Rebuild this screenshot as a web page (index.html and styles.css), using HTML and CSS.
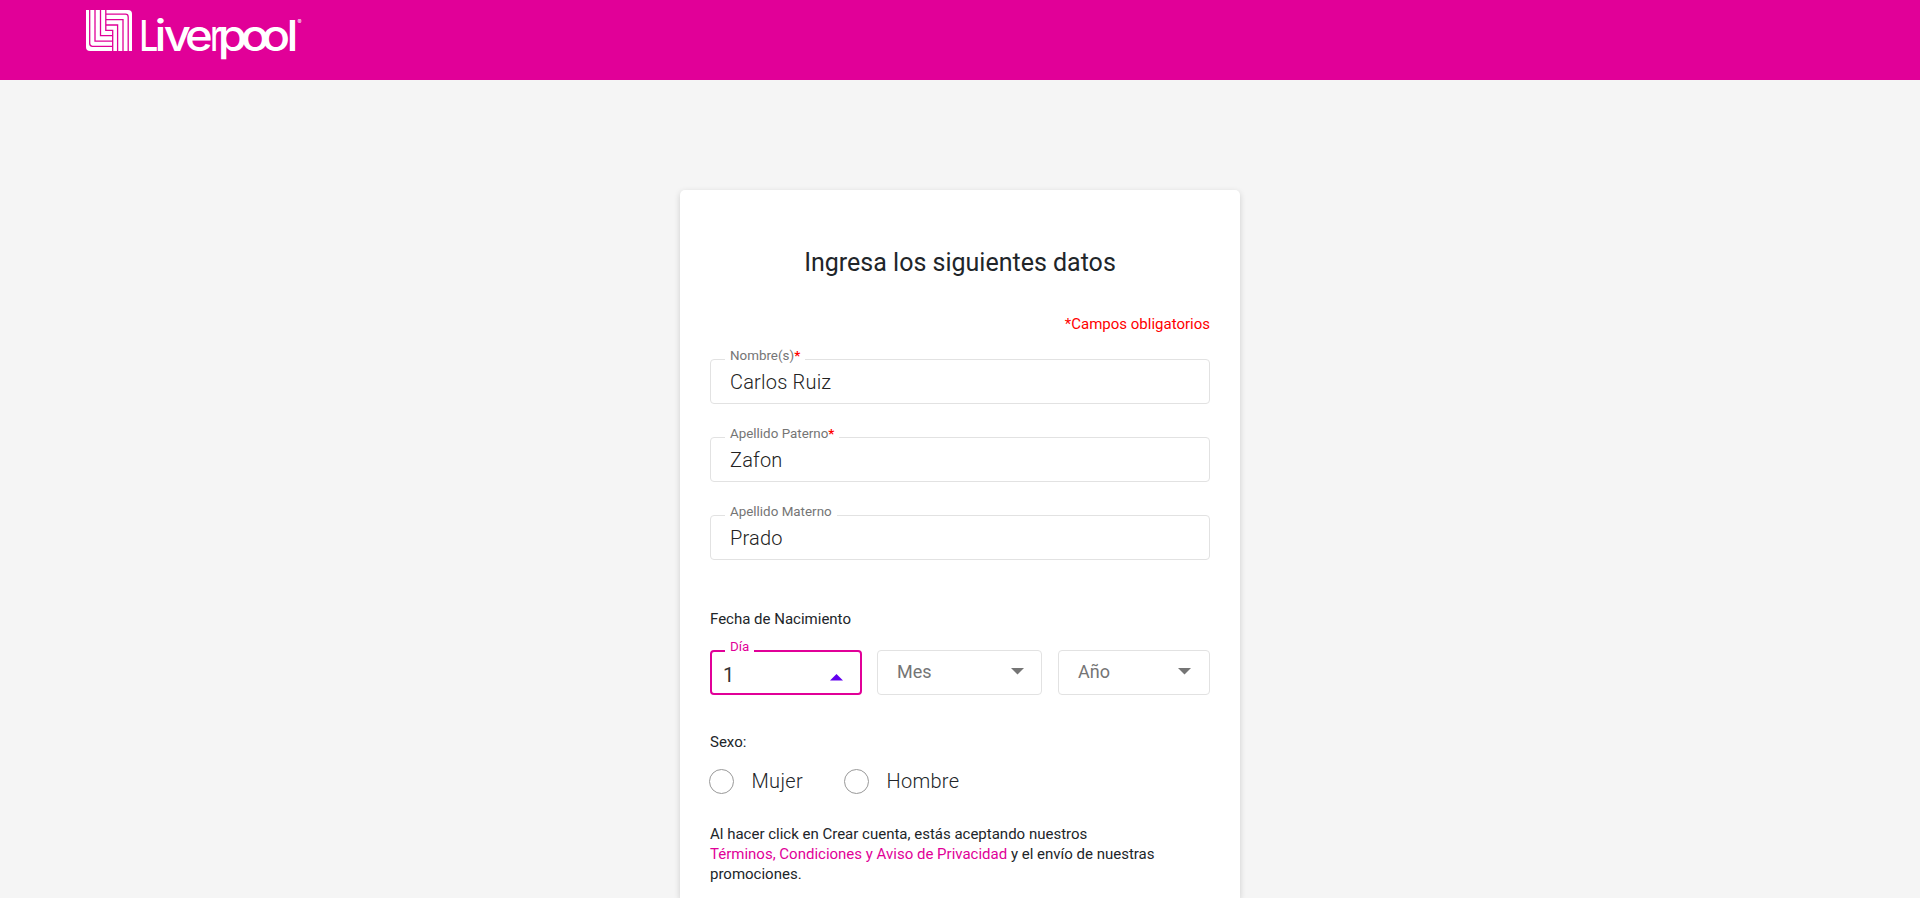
FILE: index.html
```html
<!DOCTYPE html>
<html lang="es">
<head>
<meta charset="utf-8">
<title>Liverpool</title>
<link rel="stylesheet" href="styles.css">
</head>
<body>
<header class="topbar">
  <svg class="logo" width="220" height="56" viewBox="0 0 220 56" role="img" aria-label="Liverpool">
    <path class="mark" d="M0 0H42Q46 0 46 4V41H4Q0 41 0 37Z"/>
    <path class="stripe" d="M3.700 0V33.500Q3.700 36.300 6.500 36.300H26.700M9 0V31.200H26.700M14.500 0V25.700H26.700M19.800 4.200H39.500Q42.200 4.200 42.200 7V41M19.800 9.600H37V41M19.800 15H31.600V41M19.800 0V20.300H26.700V41"/>
    <g class="wordmark">
      <text transform="translate(53.300 40.500) scale(.78 1)">L</text>
      <text transform="translate(0 40.500) scale(1.100 1)" x="62.300 70.600 89.900">ive</text>
      <text transform="translate(124.300 40.500) scale(.72 1)">r</text>
      <text transform="translate(0 40.500) scale(1.100 1)" x="119.700 140.700 159.500 182.300">pool</text>
    </g>
    <text class="reg" x="211.500" y="14">®</text>
  </svg>
</header>
<main class="card">
  <h1 class="title">Ingresa los siguientes datos</h1>
  <p class="required">*Campos obligatorios</p>
  <form class="form">
    <div class="field"><span class="label">Nombre(s)<b class="star">*</b></span><span class="value">Carlos Ruiz</span></div>
    <div class="field"><span class="label">Apellido Paterno<b class="star">*</b></span><span class="value">Zafon</span></div>
    <div class="field"><span class="label">Apellido Materno</span><span class="value">Prado</span></div>
    <p class="caption">Fecha de Nacimiento</p>
    <div class="dates">
      <div class="select select-active"><span class="label label-active">Día</span><span class="day">1</span><svg class="arrow arrow-up" width="13" height="7" viewBox="0 0 13 7"><path d="M0 6.500L6.500 0 13 6.500Z"/></svg></div>
      <div class="select select-month"><span class="placeholder">Mes</span><svg class="arrow" width="13" height="7" viewBox="0 0 13 7"><path d="M0 0H13L6.500 6.500Z"/></svg></div>
      <div class="select"><span class="placeholder">Año</span><svg class="arrow" width="13" height="7" viewBox="0 0 13 7"><path d="M0 0H13L6.500 6.500Z"/></svg></div>
    </div>
    <p class="caption caption-sex">Sexo:</p>
    <div class="radios">
      <label class="radio"><span class="circle"></span>Mujer</label>
      <label class="radio"><span class="circle"></span>Hombre</label>
    </div>
    <p class="terms">Al hacer click en Crear cuenta, estás aceptando nuestros<br><a class="link">Términos, Condiciones y Aviso de Privacidad</a> y el envío de nuestras<br>promociones.</p>
  </form>
</main>
</body>
</html>
```
FILE: styles.css
```css
* { box-sizing: border-box; }
html { height: 100%; overflow: hidden; }
body { margin: 0; height: 898px; overflow: hidden; background: #f5f5f5; color: #212529; font-family: Roboto, sans-serif; }
p, h1 { margin: 0; font-weight: 400; }
.topbar { height: 80px; background: #e10098; padding: 10px 0 0 86px; }
.logo { display: block; overflow: visible; }
.mark { fill: #fff; }
.stripe { fill: none; stroke: #e10098; stroke-width: 1.3; }
.wordmark { font: 500 43px Inter, sans-serif; fill: #fff; }
.reg { font: 400 6px Inter, sans-serif; fill: #fff; }
.card { width: 560px; height: 708px; margin: 110px auto 0; padding: 57px 30px 0; background: #fff; border-radius: 5px 5px 0 0; box-shadow: 0 2px 6px rgba(0, 0, 0, .16); }
.title { font-size: 25px; line-height: 32px; text-align: center; }
.required { margin-top: 35px; font-size: 15px; line-height: 20px; text-align: right; color: #f00; }
.form { margin-top: 25px; }
.field, .select { position: relative; display: flex; align-items: center; height: 45px; border: 1px solid #e2e2e2; border-radius: 4px; padding: 0 19px; }
.field { margin-bottom: 33px; }
.label { position: absolute; left: 14px; top: -12px; padding: 0 5px; background: #fff; font-size: 13.400px; line-height: 16px; color: #757575; }
.star { color: #f00; }
.value { padding-top: 1px; font-size: 20px; font-weight: 300; color: #222; letter-spacing: .2px; }
.caption { padding-top: 16px; font-size: 15px; line-height: 20px; }
.dates { display: grid; grid-template-columns: 152px 165px 152px; column-gap: 15px; margin-top: 21px; }
.select { justify-content: space-between; padding-right: 18px; }
.select:last-child { width: 152px; margin-left: 1px; }
.select-month { padding-right: 17px; }
.select-active { border: 2px solid #e10098; padding: 5px 17px 0 11px; }
.label-active { left: 13px; top: -13px; color: #e10098; }
.day { font-size: 20px; color: #333; }
.placeholder { margin-top: -2px; font-size: 18px; color: #757575; }
.arrow { fill: #757575; margin-top: -3px; }
.arrow-up { fill: #6200ee; margin-top: 4px; }
.caption-sex { padding-top: 37px; }
.radios { display: flex; gap: 41px; margin: 17px 0 0 -1px; }
.radio { display: flex; align-items: center; gap: 17.500px; font-size: 20px; line-height: 25px; font-weight: 300; letter-spacing: .3px; }
.circle { width: 25px; height: 25px; border: 1px solid #999; border-radius: 50%; }
.terms { margin-top: 30px; font-size: 15px; line-height: 20px; }
.link { color: #e10098; }
```
